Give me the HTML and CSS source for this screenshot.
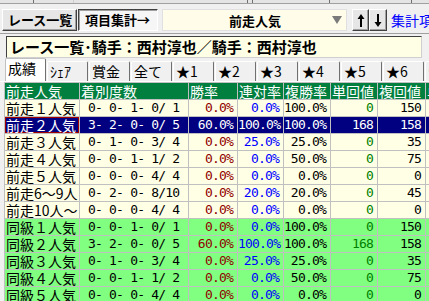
FILE: index.html
```html
<!DOCTYPE html>
<html lang="ja">
<head>
    <meta charset="UTF-8">
    <title>項目集計</title>
    <link rel="stylesheet" href="styles.css">
</head>
<body>
    <div class="strip">
        <span></span><span></span><span></span><span></span><span></span><span></span>
    </div>

    <div class="toolbar">
        <button class="btn btn-list">レース一覧</button>
        <button class="btn btn-on">項目集計→</button>
        <div class="select">
            <span class="select-text">前走人気</span>
            <svg class="select-arrow" width="10" height="8" viewBox="0 0 10 8"><polygon points="0,0 10,0 5,8" fill="#7a7a7a"/></svg>
        </div>
        <button class="btn btn-arrow btn-up">
            <svg width="8" height="15" viewBox="0 0 8 15"><path d="M4 1 L7.5 6 L5 6 L5 14 L3 14 L3 6 L0.5 6 Z" fill="#000"/></svg>
        </button>
        <button class="btn btn-arrow btn-down">
            <svg width="8" height="15" viewBox="0 0 8 15"><path d="M4 14 L7.5 9 L5 9 L5 1 L3 1 L3 9 L0.5 9 Z" fill="#000"/></svg>
        </button>
        <span class="link">集計項目</span>
    </div>

    <div class="rule"></div>

    <div class="title">レース一覧･騎手：西村淳也／騎手：西村淳也</div>

    <div class="tabs">
        <div class="tab active">成績</div>
        <div class="tab">ｼｪｱ</div>
        <div class="tab">賞金</div>
        <div class="tab">全て</div>
        <div class="tab">★1</div>
        <div class="tab">★2</div>
        <div class="tab">★3</div>
        <div class="tab">★4</div>
        <div class="tab">★5</div>
        <div class="tab">★6</div>
        <div class="tab">★7</div>
    </div>

    <div class="grid">
        <div class="hd">前走人気</div><div class="hd">着別度数</div><div class="hd">勝率</div><div class="hd">連対率</div><div class="hd">複勝率</div><div class="hd">単回値</div><div class="hd">複回値</div><div class="hd">単勝</div>

        <div class="lbl">前走１人気</div><div class="rec">0- 0- 1- 0/ 1</div><div class="num win">0.0%</div><div class="num ren">0.0%</div><div class="num">100.0%</div><div class="num tan">0</div><div class="num">150</div><div></div>
        <div class="lbl sel sel-first">前走２人気</div><div class="rec sel">3- 2- 0- 0/ 5</div><div class="num sel">60.0%</div><div class="num sel">100.0%</div><div class="num sel">100.0%</div><div class="num sel">168</div><div class="num sel">158</div><div class="sel"></div>
        <div class="lbl">前走３人気</div><div class="rec">0- 1- 0- 3/ 4</div><div class="num win">0.0%</div><div class="num ren">25.0%</div><div class="num">25.0%</div><div class="num tan">0</div><div class="num">35</div><div></div>
        <div class="lbl">前走４人気</div><div class="rec">0- 0- 1- 1/ 2</div><div class="num win">0.0%</div><div class="num ren">0.0%</div><div class="num">50.0%</div><div class="num tan">0</div><div class="num">75</div><div></div>
        <div class="lbl">前走５人気</div><div class="rec">0- 0- 0- 4/ 4</div><div class="num win">0.0%</div><div class="num ren">0.0%</div><div class="num">0.0%</div><div class="num tan">0</div><div class="num">0</div><div></div>
        <div class="lbl">前走6～9人</div><div class="rec">0- 2- 0- 8/10</div><div class="num win">0.0%</div><div class="num ren">20.0%</div><div class="num">20.0%</div><div class="num tan">0</div><div class="num">45</div><div></div>
        <div class="lbl">前走10人～</div><div class="rec">0- 0- 0- 4/ 4</div><div class="num win">0.0%</div><div class="num ren">0.0%</div><div class="num">0.0%</div><div class="num tan">0</div><div class="num">0</div><div></div>

        <div class="lbl grn">同級１人気</div><div class="rec grn">0- 0- 1- 0/ 1</div><div class="num grn win">0.0%</div><div class="num grn ren">0.0%</div><div class="num grn">100.0%</div><div class="num grn tan">0</div><div class="num grn">150</div><div class="grn"></div>
        <div class="lbl grn">同級２人気</div><div class="rec grn">3- 2- 0- 0/ 5</div><div class="num grn win">60.0%</div><div class="num grn ren">100.0%</div><div class="num grn">100.0%</div><div class="num grn tan">168</div><div class="num grn">158</div><div class="grn"></div>
        <div class="lbl grn">同級３人気</div><div class="rec grn">0- 1- 0- 3/ 4</div><div class="num grn win">0.0%</div><div class="num grn ren">25.0%</div><div class="num grn">25.0%</div><div class="num grn tan">0</div><div class="num grn">35</div><div class="grn"></div>
        <div class="lbl grn">同級４人気</div><div class="rec grn">0- 0- 1- 1/ 2</div><div class="num grn win">0.0%</div><div class="num grn ren">0.0%</div><div class="num grn">50.0%</div><div class="num grn tan">0</div><div class="num grn">75</div><div class="grn"></div>
        <div class="lbl grn">同級５人気</div><div class="rec grn">0- 0- 0- 4/ 4</div><div class="num grn win">0.0%</div><div class="num grn ren">0.0%</div><div class="num grn">0.0%</div><div class="num grn tan">0</div><div class="num grn">0</div><div class="grn"></div>
    </div>
</body>
</html>
```

FILE: styles.css
```css
:root {
    --face: #f0f0f0;
    --shadow: #a0a0a0;
    --cream: #ffffe6;
    --green-head: #007f3f;
    --green-row: #80ff80;
    --grid: #c0c0c0;
    --navy: #000080;
}

* {
    box-sizing: border-box;
    margin: 0;
    padding: 0;
}

body {
    width: 429px;
    height: 301px;
    overflow: hidden;
    background-color: var(--face);
    font-family: 'Noto Sans CJK JP', sans-serif;
    color: #000;
}

/* bottoms of the button row above */
.strip {
    display: flex;
    height: 4px;
    border-bottom: 1px solid var(--shadow);
    background-color: #e4e4e4;
}

.strip span {
    flex: none;
    border-right: 1px solid #707070;
}

.strip span:nth-child(1) { width: 34px; }
.strip span:nth-child(2) { width: 40px; border-right-color: #d0d0d0; }
.strip span:nth-child(3) { width: 174px; }
.strip span:nth-child(4) { width: 5px; }
.strip span:nth-child(5) { width: 77px; }
.strip span:nth-child(6) { width: 82px; }

/* toolbar */
.toolbar {
    display: flex;
    align-items: center;
    height: 22px;
    margin-top: 5px;
    padding-left: 2px;
}

.toolbar > * {
    flex: none;
}

.btn {
    height: 22px;
    font-family: 'Noto Sans CJK JP', sans-serif;
    font-size: 13px;
    font-weight: 700;
    line-height: 18px;
    white-space: nowrap;
    background-color: #e6e6e6;
    border: 1px solid;
    border-color: #fff #404040 #404040 #fff;
    box-shadow: inset -1px -1px 0 #a0a0a0;
    color: #000;
    text-align: left;
    padding-left: 5px;
}

.btn-list {
    width: 75px;
}

.btn-on {
    width: 80px;
    margin-left: 1px;
    background-color: #f6f6f6;
    border-color: #404040 #fff #fff #404040;
    box-shadow: inset 1px 1px 0 #a0a0a0;
    padding-left: 6px;
}

.select {
    display: flex;
    align-items: center;
    width: 185px;
    height: 22px;
    margin-left: 4px;
    background-color: #fffdea;
    border: 1px solid #e0e0e0;
}

.select-text {
    font-size: 13px;
    font-weight: 700;
    margin-left: 66px;
    flex: 1;
}

.select-arrow {
    margin-right: 4px;
}

.btn-arrow {
    width: 17px;
    display: flex;
    align-items: center;
    justify-content: center;
    padding: 0;
}

.btn-up {
    margin-left: 5px;
}

.btn-down {
    width: 18px;
}

.link {
    margin-left: 4px;
    font-size: 14px;
    color: #0000ff;
    white-space: nowrap;
}

.rule {
    height: 1px;
    margin-top: 2px;
    background-color: var(--shadow);
}

.title {
    height: 22px;
    margin: 2px 7px 0 6px;
    padding-left: 3px;
    background-color: var(--cream);
    border: 1px solid;
    border-color: #404040 #d0d0d0 #d0d0d0 #404040;
    font-size: 15px;
    font-weight: 700;
    line-height: 20px;
    white-space: nowrap;
    overflow: hidden;
}

/* tabs */
.tabs {
    display: flex;
    align-items: flex-end;
    height: 24px;
    padding-left: 5px;
    border-bottom: 1px solid #fff;
}

.tab {
    flex: none;
    width: 41px;
    height: 20px;
    margin-right: 1px;
    padding-left: 2px;
    background-color: var(--face);
    border: 1px solid;
    border-bottom: none;
    border-color: #fff #707070 transparent #fff;
    border-radius: 2px 2px 0 0;
    font-size: 14px;
    line-height: 18px;
    white-space: nowrap;
    overflow: hidden;
}

.tab.active {
    height: 23px;
    background-color: #fff;
    border-color: #c0c0c0 #707070 transparent #c0c0c0;
}

/* grid */
.grid {
    display: grid;
    grid-template-columns: 74px 108px 48px 45px 46px 46px 47px 40px;
    grid-auto-rows: 16px;
    gap: 1px;
    width: 480px;
    margin-left: 4px;
    padding: 1px 0 0 1px;
    background-color: var(--grid);
}

.grid > div {
    background-color: var(--cream);
    font-size: 14px;
    line-height: 16px;
    white-space: pre;
    overflow: hidden;
}

.grid > .hd {
    background-color: var(--green-head);
    color: #fff;
    padding-left: 1px;
}

.lbl {
    padding-left: 1px;
}

.grid > .rec,
.grid > .num {
    font-family: 'DejaVu Sans Mono', monospace;
    font-size: 13px;
    letter-spacing: -0.8px;
}

.rec {
    padding-left: 8px;
}

.num {
    text-align: right;
    padding-right: 4px;
}

.win { color: #900000; }
.ren { color: #0000ff; }
.tan { color: #008000; }

.grid > .grn {
    background-color: var(--green-row);
}

.grid > .sel {
    background-color: var(--navy);
    color: #fff;
}

.grid > .sel-first {
    box-shadow: inset 0 0 0 1px #a00000;
}
```
